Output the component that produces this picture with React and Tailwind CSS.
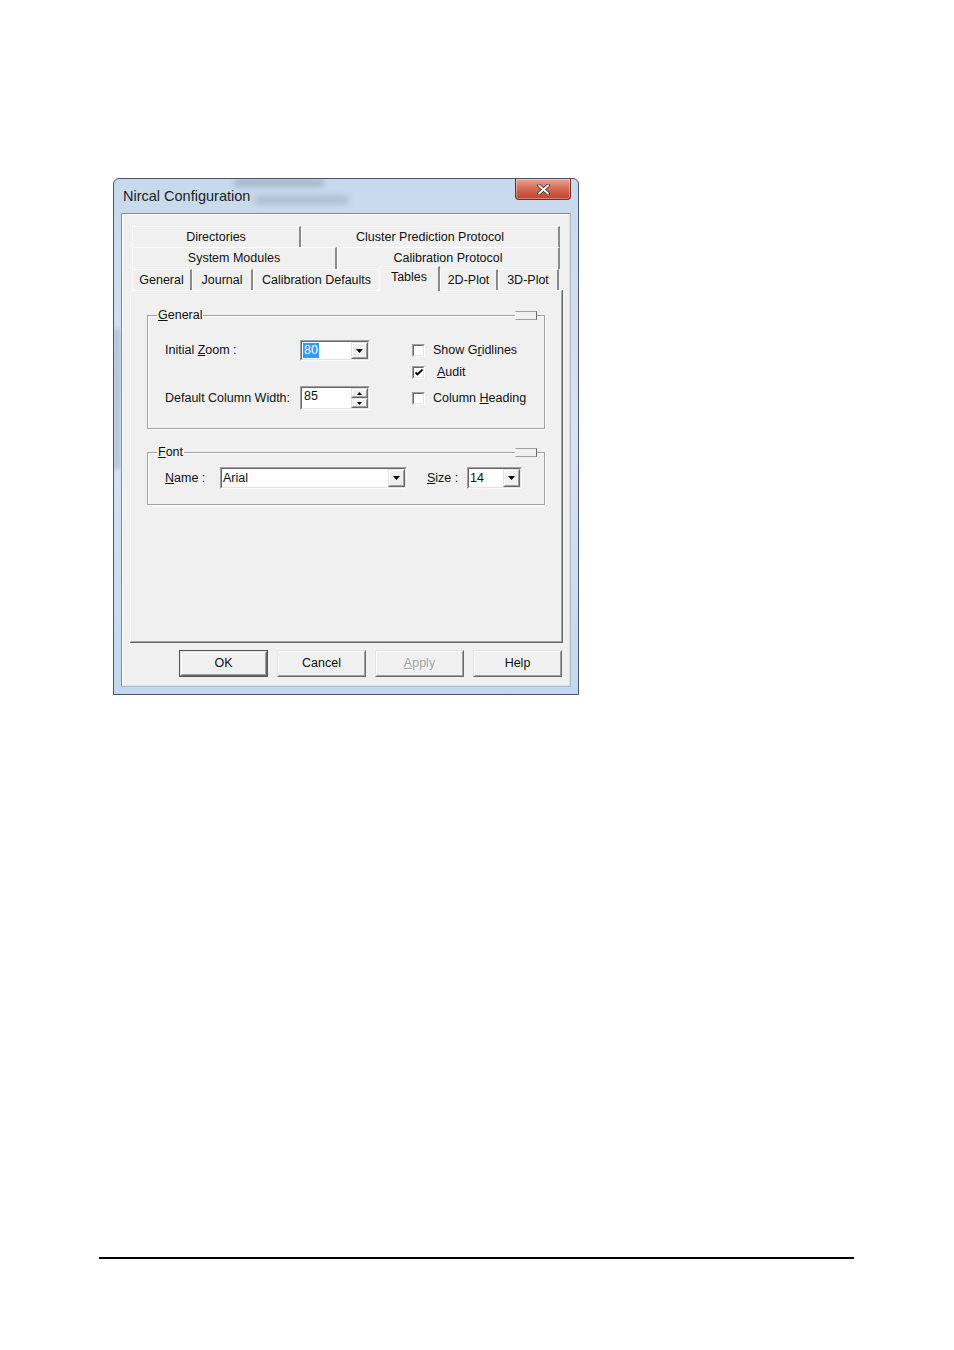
const ui = "font-['Liberation_Sans',Arial,sans-serif] text-[12.5px] text-[#111]";

function Arrow() {
  return (
    <svg width="7" height="4" viewBox="0 0 7 4">
      <path d="M0 0h7L3.5 4z" fill="#000" />
    </svg>
  );
}

function Sunken({ className, children }) {
  return (
    <div className={`border border-t-[#a0a0a0] border-l-[#a0a0a0] border-r-white border-b-white ${className}`}>
      <div className="flex h-full border border-t-[#696969] border-l-[#696969] border-r-[#e3e3e3] border-b-[#e3e3e3] bg-white">
        {children}
      </div>
    </div>
  );
}

function RaisedBtn({ className, children }) {
  return (
    <div className={`border border-t-[#e3e3e3] border-l-[#e3e3e3] border-r-[#696969] border-b-[#696969] bg-[#f0f0f0] ${className}`}>
      <div className="flex h-full items-center justify-center border border-t-white border-l-white border-r-[#a0a0a0] border-b-[#a0a0a0]">
        {children}
      </div>
    </div>
  );
}

function Combo({ className, value, selected }) {
  return (
    <Sunken className={className}>
      <div className="flex flex-1 items-center pl-[1px]">
        {selected ? (
          <span className="bg-[#3399ff] px-[1px] leading-[15px] text-white">{value}</span>
        ) : (
          <span className="leading-[15px]">{value}</span>
        )}
      </div>
      <RaisedBtn className="w-[17px]">
        <Arrow />
      </RaisedBtn>
    </Sunken>
  );
}

function Check({ checked, children, textClass = 'ml-[8px]' }) {
  return (
    <div className="flex h-[13px] items-center">
      <div className="flex h-[13px] w-[13px] items-center justify-center border border-t-[#a0a0a0] border-l-[#a0a0a0] border-r-white border-b-white bg-white">
        <div className="flex h-full w-full items-center justify-center border border-t-[#696969] border-l-[#696969] border-r-[#e3e3e3] border-b-[#e3e3e3]">
          {checked && (
            <svg width="8" height="7" viewBox="0 0 8 7">
              <path d="M0.5 3.5l2 2L7.5 0.5" stroke="#000" strokeWidth="1.8" fill="none" />
            </svg>
          )}
        </div>
      </div>
      <span className={textClass}>{children}</span>
    </div>
  );
}

function Group({ legend, className, children }) {
  return (
    <div className={`relative border border-[#a0a0a0] shadow-[inset_1px_1px_0_#fff,1px_1px_0_#fff] ${className}`}>
      <span className="absolute -top-[8px] left-[9px] bg-[#f0f0f0] px-[1px] leading-[15px]">{legend}</span>
      <div className="absolute -top-[5px] right-[7px] h-[9px] w-[22px] border border-t-[#a0a0a0] border-l-white border-r-[#696969] border-b-[#a0a0a0] bg-[#f0f0f0]" />
      {children}
    </div>
  );
}

function Tab({ w, h = 'h-[21px]', children }) {
  return (
    <div className={`flex items-center justify-center border-l border-t border-r-2 border-l-white border-t-white border-r-[#8a8a8a] ${h} ${w}`}>
      {children}
    </div>
  );
}

function DlgButton({ children, isDefault, disabled }) {
  if (isDefault) {
    return (
      <div className="h-[27px] w-[89px] border border-[#555]">
        <RaisedBtn className="h-full">{children}</RaisedBtn>
      </div>
    );
  }
  return (
    <RaisedBtn className="h-[27px] w-[89px]">
      <span className={disabled ? 'text-[#a0a0a0] [text-shadow:1px_1px_0_#fff]' : ''}>{children}</span>
    </RaisedBtn>
  );
}

export default function App() {
  return (
    <div className={`min-h-[1350px] bg-white ${ui}`}>
      <div className="pl-[113px] pt-[178px]">
        {/* window frame */}
        <div className="relative flex h-[517px] w-[466px] flex-col overflow-hidden rounded-t-[6px] border border-[#4a5665] bg-gradient-to-b from-[#c7d9ec] via-[#d6e4f3] to-[#c3d8ef]">
          <div className="pointer-events-none absolute left-[120px] top-[1px] h-[6px] w-[90px] rounded-full bg-[#5a6a7e] opacity-40 blur-[3px]" />
          <div className="pointer-events-none absolute left-[140px] top-[17px] h-[8px] w-[95px] rounded-full bg-[#7d8ea3] opacity-40 blur-[3px]" />
          <div className="pointer-events-none absolute left-0 top-[150px] h-[140px] w-[6px] bg-[#8da3bd] opacity-50 blur-[2px]" />

          {/* title bar */}
          <div className="relative flex h-[34px] items-center pl-[9px]">
            <span className="mt-[1px] text-[14.5px] text-[#1e1e1e]">Nircal Configuration</span>
            <div className="absolute right-[7px] top-0 flex h-[21px] w-[56px] items-center justify-center rounded-b-[4px] border border-t-0 border-[#7a2a1e] bg-gradient-to-b from-[#e8a497] via-[#d26a55] to-[#c1412b] shadow-[inset_0_0_0_1px_rgba(255,255,255,0.35)]">
              <svg width="13" height="11" viewBox="0 0 13 11">
                <path d="M2 1.5l9 8M11 1.5l-9 8" stroke="#3a1510" strokeWidth="3.6" strokeLinecap="round" />
                <path d="M2 1.5l9 8M11 1.5l-9 8" stroke="#fff" strokeWidth="2.2" strokeLinecap="round" />
              </svg>
            </div>
          </div>

          {/* client area */}
          <div className="mx-[7px] mb-[7px] flex flex-1 flex-col border border-t-[#7f8b99] border-l-[#7f8b99] border-r-[#a9bbd0] border-b-[#a9bbd0] bg-[#f0f0f0]">
            <div className="flex flex-1 flex-col border border-t-white border-l-white border-r-[#dfdfdf] border-b-[#dfdfdf] pl-[7px] pr-[6px] pt-[11px]">
              {/* tab rows */}
              <div className="flex flex-col pl-[2px]">
                <div className="flex">
                  <Tab w="w-[169px]">Directories</Tab>
                  <Tab w="w-[259px]">Cluster Prediction Protocol</Tab>
                </div>
                <div className="flex">
                  <Tab w="w-[205px]" h="h-[22px]">System Modules</Tab>
                  <Tab w="w-[223px]" h="h-[22px]">Calibration Protocol</Tab>
                </div>
                <div className="relative z-10 flex items-start">
                  <Tab w="w-[60px]">General</Tab>
                  <Tab w="w-[61px]">Journal</Tab>
                  <Tab w="w-[128px]">Calibration Defaults</Tab>
                  <div className="-mb-[1px] -ml-[2px] -mt-[3px] flex h-[25px] w-[61px] items-start justify-center border-l border-t border-r-2 border-l-white border-t-white border-r-[#8a8a8a] bg-[#f0f0f0] pt-[1px]">
                    Tables
                  </div>
                  <Tab w="w-[58px]">2D-Plot</Tab>
                  <Tab w="w-[61px]">3D-Plot</Tab>
                </div>
              </div>

              {/* tab page */}
              <div className="h-[353px] w-[433px] border-b border-r border-b-[#696969] border-r-[#696969]">
                <div className="h-full border-b border-l border-r border-t border-b-[#a0a0a0] border-l-white border-r-[#a0a0a0] border-t-white pl-[16px] pr-[16px] pt-[24px]">
                  <Group legend={<><u>G</u>eneral</>} className="h-[114px]">
                    <div className="flex pl-[17px] pt-[24px]">
                      <div className="flex flex-col">
                        <div className="flex h-[21px] items-center">
                          <span className="w-[135px]">
                            Initial <u>Z</u>oom :
                          </span>
                          <Combo className="h-[21px] w-[70px]" value="80" selected />
                        </div>
                        <div className="mt-[25px] flex h-[24px] items-center">
                          <span className="w-[135px]">Default Column Width:</span>
                          <Sunken className="h-[24px] w-[70px]">
                            <div className="flex flex-1 items-start pl-[2px] pt-[1px] leading-[15px]">85</div>
                            <div className="flex w-[17px] flex-col">
                              <RaisedBtn className="h-[11px]">
                                <svg width="5" height="3" viewBox="0 0 5 3">
                                  <path d="M0 3h5L2.5 0z" fill="#000" />
                                </svg>
                              </RaisedBtn>
                              <RaisedBtn className="h-[11px]">
                                <svg width="5" height="3" viewBox="0 0 5 3">
                                  <path d="M0 0h5L2.5 3z" fill="#000" />
                                </svg>
                              </RaisedBtn>
                            </div>
                          </Sunken>
                        </div>
                      </div>
                      <div className="ml-[42px] mt-[4px] flex flex-col">
                        <Check>
                          Show G<u>r</u>idlines
                        </Check>
                        <div className="mt-[9px]">
                          <Check checked textClass="ml-[12px]">
                            <u>A</u>udit
                          </Check>
                        </div>
                        <div className="mt-[13px]">
                          <Check>
                            Column <u>H</u>eading
                          </Check>
                        </div>
                      </div>
                    </div>
                  </Group>

                  <Group legend={<><u>F</u>ont</>} className="mt-[23px] h-[53px]">
                    <div className="flex items-center pl-[17px] pt-[14px]">
                      <span className="w-[55px]">
                        <u>N</u>ame :
                      </span>
                      <Combo className="h-[22px] w-[187px]" value="Arial" />
                      <span className="ml-[20px] w-[40px]">
                        <u>S</u>ize :
                      </span>
                      <Combo className="h-[22px] w-[55px]" value="14" />
                    </div>
                  </Group>
                </div>
              </div>

              {/* dialog buttons */}
              <div className="mt-[7px] flex justify-end gap-[9px] pr-[1px]">
                <DlgButton isDefault>OK</DlgButton>
                <DlgButton>Cancel</DlgButton>
                <DlgButton disabled>
                  <u>A</u>pply
                </DlgButton>
                <DlgButton>Help</DlgButton>
              </div>
            </div>
          </div>
        </div>
      </div>

      {/* page footer rule */}
      <div className="ml-[99px] mt-[562px] h-[2px] w-[755px] bg-black" />
    </div>
  );
}
